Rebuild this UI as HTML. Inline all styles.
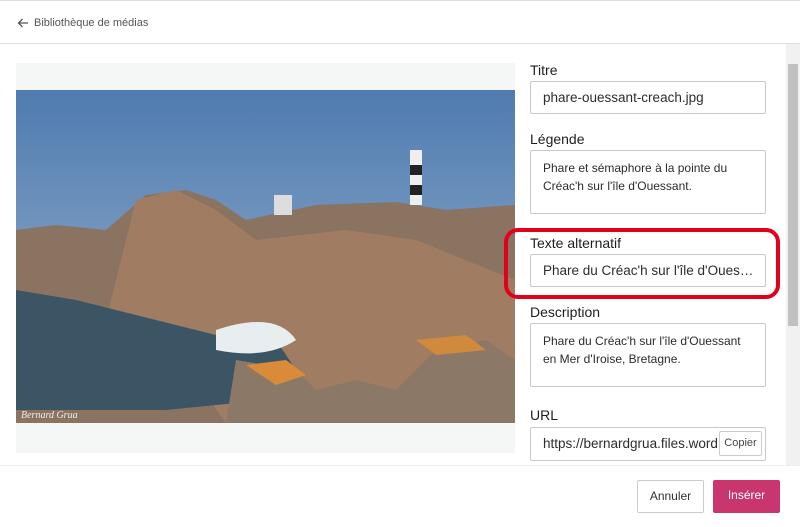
<!DOCTYPE html>
<html><head><meta charset="utf-8"><style>
*{box-sizing:border-box;margin:0;padding:0}
body{width:800px;height:527px;overflow:hidden;background:#fff;font-family:"Liberation Sans",sans-serif;color:#1e1e1e;position:relative}
.top{position:absolute;left:0;top:0;width:800px;height:44px;border-top:1px solid #ddd;border-bottom:1px solid #ddd}
.top span{position:absolute;left:34px;top:16px;font-size:11px;color:#555}
.top svg{position:absolute;left:17px;top:16px}
.imgbox{position:absolute;left:16px;top:63px;width:499px;height:390px;background:#f5f6f6}
.photo{position:absolute;left:16px;top:90px}
.lbl{position:absolute;left:530px;font-size:14px;color:#1e1e1e}
.inp{position:absolute;left:530px;width:236px;border:1px solid #c8c8c8;border-radius:2px;font-size:13.5px;color:#2c2c2c;padding-left:12px;white-space:nowrap;overflow:hidden;text-overflow:ellipsis;background:#fff}
.ta{font-size:12px;line-height:18px;padding:8px 12px;white-space:normal}
.red{position:absolute;left:504px;top:228px;width:276px;height:71px;border:4px solid #e3001b;border-radius:14px}
.sb{position:absolute;left:786px;top:44px;width:14px;height:421px;background:#f1f1f1}
.sb div{position:absolute;left:2px;top:20px;width:10px;height:262px;background:#c1c1c1}
.foot{position:absolute;left:0;top:465px;width:800px;border-top:1px solid #eee}
.btn{position:absolute;top:480px;height:33px;font-size:12px;border-radius:2px;text-align:center;line-height:31px}
</style></head><body>
<div class="top"><svg width="12" height="12" viewBox="0 0 12 12"><path d="M11 6H1.5M5.5 2L1.5 6l4 4" stroke="#555" stroke-width="1.3" fill="none"/></svg><span>Bibliothèque de médias</span></div>
<div class="imgbox"></div>
<svg class="photo" width="499" height="333" viewBox="0 0 499 333">
<defs><linearGradient id="sky" x1="0" y1="0" x2="0" y2="1"><stop offset="0" stop-color="#4f7bb0"/><stop offset="1" stop-color="#9fb7cf"/></linearGradient>
<linearGradient id="sea" x1="0" y1="0" x2="0" y2="1"><stop offset="0" stop-color="#5c7a86"/><stop offset="1" stop-color="#213744"/></linearGradient></defs>
<rect width="499" height="333" fill="url(#sky)"/>
<rect y="150" width="499" height="183" fill="url(#sea)"/>
<path d="M0 140 L40 135 L90 140 L130 105 L170 100 L200 110 L230 130 L300 115 L380 112 L430 120 L499 115 L499 333 L0 333Z" fill="#8a7360"/>
<path d="M90 230 L120 110 L160 100 L200 120 L240 150 L330 140 L400 150 L499 190 L499 333 L210 333 L150 250Z" fill="#a07d62"/>
<path d="M0 200 L60 210 L140 230 L200 245 L260 250 L280 280 L250 310 L150 320 L0 320Z" fill="#3c5565"/>
<path d="M200 240 Q260 220 280 250 Q250 270 200 260Z" fill="#e8eef0"/>
<path d="M220 270 L280 280 L300 300 L340 290 L380 300 L420 260 L470 250 L499 270 L499 333 L210 333Z" fill="#8c7866"/>
<path d="M230 275 L270 270 L290 285 L260 295Z" fill="#d98b3a"/>
<path d="M400 250 L450 245 L470 260 L420 265Z" fill="#cf8a3c"/>
<rect x="394" y="60" width="12" height="55" fill="#eee"/><rect x="394" y="75" width="12" height="10" fill="#222"/><rect x="394" y="95" width="12" height="10" fill="#222"/>
<rect x="258" y="105" width="18" height="20" fill="#ddd"/>
<text x="5" y="328" font-size="10" font-style="italic" fill="#eee" font-family="Liberation Serif">Bernard Grua</text>
</svg>
<div class="lbl" style="top:62px">Titre</div>
<div class="inp" style="top:81px;height:33px;line-height:31px">phare-ouessant-creach.jpg</div>
<div class="lbl" style="top:131px">Légende</div>
<div class="inp ta" style="top:150px;height:64px">Phare et sémaphore à la pointe du Créac'h sur l'île d'Ouessant.</div>
<div class="lbl" style="top:235px">Texte alternatif</div>
<div class="inp" style="top:254px;height:33px;line-height:31px;padding-right:6px">Phare du Créac'h sur l'île d'Ouessant en Mer d'Iroise</div>
<div class="red"></div>
<div class="lbl" style="top:304px">Description</div>
<div class="inp ta" style="top:323px;height:64px">Phare du Créac'h sur l'île d'Ouessant en Mer d'Iroise, Bretagne.</div>
<div class="lbl" style="top:407px">URL</div>
<div class="inp" style="top:427px;height:34px;line-height:32px;text-overflow:clip">https://bernardgrua.files.word</div>
<div style="position:absolute;left:719px;top:431px;width:43px;height:25px;border:1px solid #ccc;background:#fff;border-radius:2px;font-size:11px;line-height:23px;text-align:center;color:#444">Copier</div>
<div class="sb"><div></div></div>
<div class="foot"></div>
<div class="btn" style="left:637px;width:67px;border:1px solid #ccc;color:#333">Annuler</div>
<div class="btn" style="left:713px;width:67px;background:#c9356e;color:#fff">Insérer</div>
</body></html>
